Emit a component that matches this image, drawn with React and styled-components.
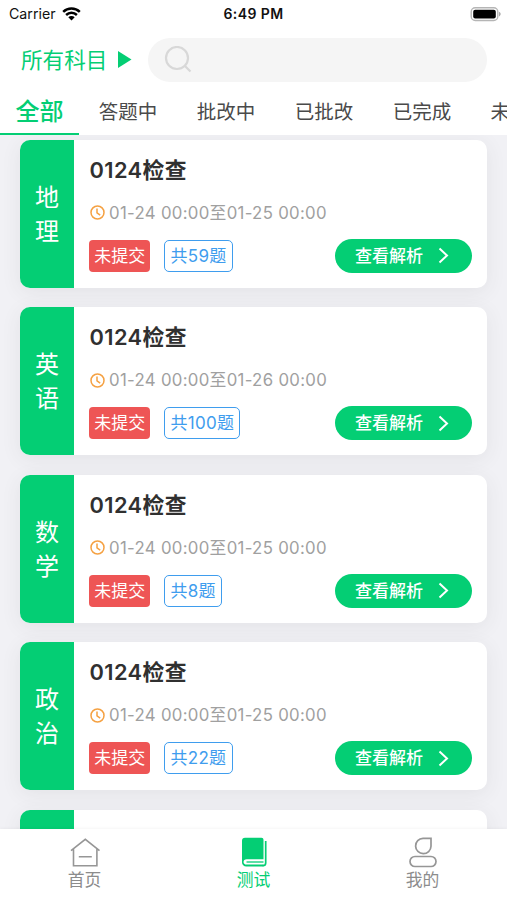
import React from "react";
import styled, { createGlobalStyle } from "styled-components";

const GREEN = "#04ce74";

const GlobalStyle = createGlobalStyle`
  * {
    box-sizing: border-box;
  }
  body {
    margin: 0;
    background: #fff;
    font-family: Inter, "Noto Sans CJK SC", sans-serif;
  }
`;

const Screen = styled.div`
  display: flex;
  flex-direction: column;
  width: 507px;
  height: 900px;
  overflow: hidden;
  background: #fff;
`;

const StatusBar = styled.div`
  display: grid;
  grid-template-columns: 1fr auto 1fr;
  align-items: center;
  flex: none;
  height: 28px;
  padding: 0 6px 0 9px;
  color: #111;
  font-size: 14.2px;
  line-height: 28px;
`;

const Carrier = styled.div`
  display: flex;
  align-items: center;
  gap: 6px;
`;

const Time = styled.div`
  margin-right: 3px;
  font-size: 14px;
  font-weight: 600;
  letter-spacing: 0.4px;
`;

const BatteryIcon = styled.svg`
  justify-self: end;
`;

const Header = styled.div`
  display: flex;
  align-items: center;
  flex: none;
  height: 63px;
  padding: 0 20px;
`;

const Subject = styled.div`
  display: flex;
  align-items: center;
  justify-content: space-between;
  width: 112px;
  margin-right: 16px;
  padding-left: 1px;
  color: ${GREEN};
  font-size: 21.6px;
  line-height: 30px;
`;

const Search = styled.div`
  display: flex;
  align-items: center;
  flex: 1;
  height: 44px;
  padding-left: 16px;
  border-radius: 22px;
  background: #f5f5f5;
`;

const Tabs = styled.div`
  display: flex;
  flex: none;
  height: 44px;
  overflow: hidden;
`;

const Tab = styled.div`
  flex: none;
  width: ${({ $active }) => ($active ? "79px" : "98px")};
  height: 44px;
  border-bottom: 2.5px solid ${({ $active }) => ($active ? GREEN : "transparent")};
  color: ${({ $active }) => ($active ? GREEN : "#4a4a4a")};
  font-size: ${({ $active }) => ($active ? "24px" : "19.5px")};
  font-weight: ${({ $active }) => ($active ? 500 : 400)};
  line-height: 42px;
  text-align: center;
`;

const List = styled.div`
  display: flex;
  flex: 1;
  flex-direction: column;
  gap: 19.5px;
  min-height: 0;
  padding: 4.7px 20px 0;
  overflow: hidden;
  background: #f1f1f5;
`;

const Card = styled.div`
  display: flex;
  flex: none;
  height: 148px;
  border-radius: 10px;
  background: #fff;
  box-shadow: 0 4px 20px rgba(60, 60, 60, 0.08);
`;

const SubjectLabel = styled.div`
  display: flex;
  flex-direction: column;
  align-items: center;
  justify-content: center;
  width: 54px;
  padding-top: 2px;
  border-radius: 10px 0 0 10px;
  background: ${GREEN};
  color: #fff;
  font-size: 24px;
  line-height: 34px;
`;

const CardBody = styled.div`
  flex: 1;
  padding: 15px 15px 0 15px;
`;

const Title = styled.div`
  padding-left: 0.5px;
  color: #303030;
  font-size: 21.8px;
  font-weight: 600;
  letter-spacing: 0.4px;
  line-height: 31px;
`;

const Period = styled.div`
  display: flex;
  align-items: center;
  gap: 4px;
  height: 24px;
  margin-top: 15px;
  padding-left: 1px;
  color: #a0a0a0;
  font-size: 16.8px;
  letter-spacing: 0.3px;
  line-height: 24px;
  white-space: nowrap;
`;

const CardFooter = styled.div`
  display: flex;
  align-items: center;
  margin-top: 14px;
`;

const Badge = styled.div`
  height: 32px;
  padding: 0 5.2px;
  border-radius: 4px;
  background: #ee5555;
  color: #fff;
  font-size: 17px;
  font-weight: 400;
  line-height: 33px;
`;

const Count = styled.div`
  height: 32px;
  margin-left: 14px;
  padding: 0 5.2px;
  border: 1.4px solid #3f9dee;
  border-radius: 5px;
  color: #3f9dee;
  font-size: 17px;
  letter-spacing: 0.25px;
  line-height: 31px;
`;

const ReviewButton = styled.button`
  display: flex;
  align-items: center;
  justify-content: space-between;
  width: 137px;
  height: 34px;
  margin-left: auto;
  padding: 1px 23px 0 20px;
  border: 0;
  border-radius: 17px;
  background: ${GREEN};
  color: #fff;
  font-family: inherit;
  font-size: 17px;
  font-weight: 500;
  line-height: 33px;
`;

const TabBar = styled.div`
  display: grid;
  grid-template-columns: repeat(3, 1fr);
  flex: none;
  height: 71px;
  background: #fff;
  box-shadow: 0 -1px 3px rgba(0, 0, 0, 0.04);
  z-index: 1;
`;

const TabBarItem = styled.div`
  display: flex;
  flex-direction: column;
  align-items: center;
  padding-top: 7px;
  color: ${({ $active }) => ($active ? GREEN : "#8c8c8c")};
  font-size: 16.8px;
  line-height: 24px;
`;

const HomeIcon = () => (
  <svg width="32" height="32" viewBox="0 0 32 32" fill="none" stroke="#969696" strokeWidth="1.6">
    <path d="M2 14.6 16.3 3.3l14.2 11.3M4.5 12.8v17h23.4v-17M9.8 20.8h13" />
  </svg>
);

const BookIcon = () => (
  <svg width="32" height="32" viewBox="0 0 32 32" fill="none">
    <path
      d="M7 1.7h16.5a2 2 0 0 1 2 2v19.6H8.7c-4.2 0-4.2 5.3 0 5.3h16.8v2H8.2a4.2 4.2 0 0 1-4.2-4.2V4.7a3 3 0 0 1 3-3Z"
      fill={GREEN}
    />
    <path d="M8.5 26h17" stroke={GREEN} strokeWidth="1.3" />
    <path d="M27.7 5v22c0 1.8-1 2.7-3 2.7" stroke={GREEN} strokeWidth="1.7" />
  </svg>
);

const UserIcon = () => (
  <svg width="32" height="32" viewBox="0 0 32 32" fill="none" stroke="#969696" strokeWidth="1.7">
    <path d="M16 2.3h8v7.9a7.7 7.7 0 1 1-8-7.9Z" />
    <rect x="3" y="20.5" width="26" height="10" rx="5" />
  </svg>
);

const ClockIcon = () => (
  <svg width="15" height="15" viewBox="0 0 15 15" fill="none" stroke="#f5a142" strokeWidth="1.5">
    <circle cx="7.5" cy="7.5" r="6.5" />
    <path d="M7 3.5v4.3l3.2 2.3" />
  </svg>
);

const tabs = ["全部", "答题中", "批改中", "已批改", "已完成", "未"];

const tests = [
  { subject: "地理", period: "01-24 00:00至01-25 00:00", count: 59 },
  { subject: "英语", period: "01-24 00:00至01-26 00:00", count: 100 },
  { subject: "数学", period: "01-24 00:00至01-25 00:00", count: 8 },
  { subject: "政治", period: "01-24 00:00至01-25 00:00", count: 22 },
];

const PartialTab = styled(Tab)`
  padding-left: 19.5px;
  text-align: left;
`;

const TestCard = ({ subject, period, count }) => (
  <Card>
    <SubjectLabel>
      {subject.split("").map((char) => (
        <span key={char}>{char}</span>
      ))}
    </SubjectLabel>
    <CardBody>
      <Title>0124检查</Title>
      <Period>
        <ClockIcon />
        <span>{period}</span>
      </Period>
      <CardFooter>
        <Badge>未提交</Badge>
        <Count>共{count}题</Count>
        <ReviewButton>
          查看解析
          <svg width="11" height="18" viewBox="0 0 11 18" fill="none" stroke="#fff" strokeWidth="2">
            <path d="m1.5 1.5 7.5 7-7.5 7" />
          </svg>
        </ReviewButton>
      </CardFooter>
    </CardBody>
  </Card>
);

const App = () => (
  <>
    <GlobalStyle />
    <Screen>
      <StatusBar>
        <Carrier>
          Carrier
          <svg width="19" height="15" viewBox="0 0 19 15" fill="none" stroke="#000" strokeWidth="2.5">
            <path d="M1.2 4.8a12 12 0 0 1 16.6 0M4.1 8a7.8 7.8 0 0 1 10.8 0" />
            <path d="M9.5 13.5 6.3 10.3a4.6 4.6 0 0 1 6.4 0Z" fill="#000" stroke="none" />
          </svg>
        </Carrier>
        <Time>6:49 PM</Time>
        <BatteryIcon width="31" height="15" viewBox="0 0 31 15" fill="none">
          <rect x="1.2" y="0.7" width="26.6" height="12.8" rx="4" stroke="#b5b5b5" strokeWidth="1.4" />
          <rect x="3.2" y="2.7" width="22.6" height="8.8" rx="2" fill="#000" />
          <path d="M29 4.8c2.2.9 2.2 3.7 0 4.6Z" fill="#aaa" />
        </BatteryIcon>
      </StatusBar>
      <Header>
        <Subject>
          所有科目
          <svg width="14" height="17" viewBox="0 0 14 17">
            <path d="M0 0v17l13.5-8.5Z" fill={GREEN} />
          </svg>
        </Subject>
        <Search>
          <svg width="28" height="28" viewBox="0 0 28 28" fill="none" stroke="#d8d8d8" strokeWidth="2.2">
            <circle cx="13" cy="12" r="11" />
            <path d="m20.5 19.5 6 6" />
          </svg>
        </Search>
      </Header>
      <Tabs>
        {tabs.map((tab, i) =>
          i === tabs.length - 1 ? (
            <PartialTab key={tab}>{tab}</PartialTab>
          ) : (
            <Tab key={tab} $active={i === 0}>
              {tab}
            </Tab>
          )
        )}
      </Tabs>
      <List>
        {tests.map((test) => (
          <TestCard key={test.subject} {...test} />
        ))}
        <Card>
          <SubjectLabel />
          <CardBody>
            <Title>0124检查</Title>
          </CardBody>
        </Card>
      </List>
      <TabBar>
        <TabBarItem>
          <HomeIcon />
          首页
        </TabBarItem>
        <TabBarItem $active>
          <BookIcon />
          测试
        </TabBarItem>
        <TabBarItem>
          <UserIcon />
          我的
        </TabBarItem>
      </TabBar>
    </Screen>
  </>
);

export default App;
